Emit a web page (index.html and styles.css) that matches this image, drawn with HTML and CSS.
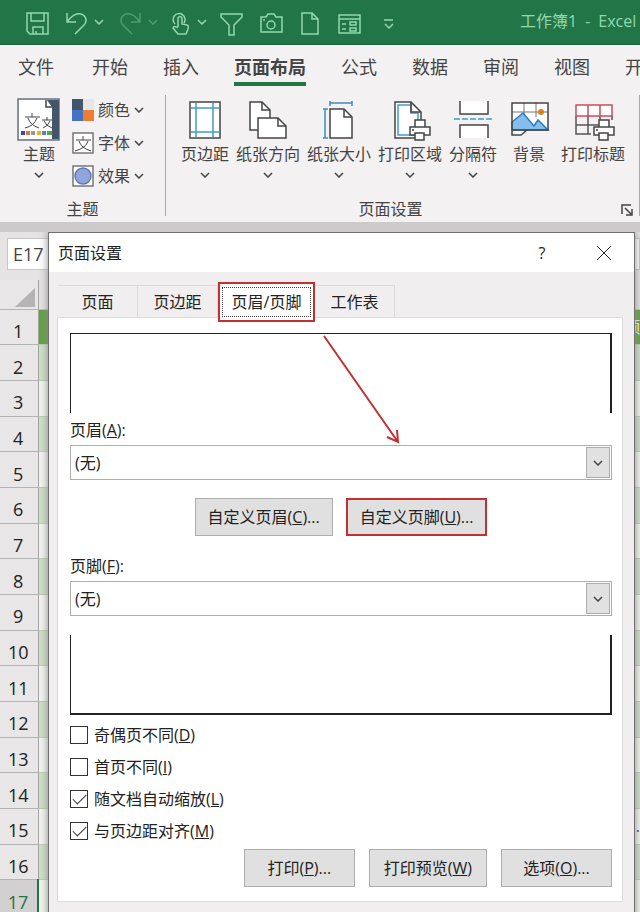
FILE: index.html
```html
<!DOCTYPE html>
<html lang="zh-CN">

<head>
    <meta charset="utf-8">
    <title>工作簿1 - Excel</title>
    <link rel="stylesheet" href="styles.css">
</head>

<body>
    <!-- shared shapes -->
    <svg class="defs" width="0" height="0">
        <symbol id="chev" viewBox="0 0 10 6"><path d="M1 1l4 4 4-4" /></symbol>
        <symbol id="printer" viewBox="0 0 22 22">
            <path d="M6 1h10v7H6zM1 8h20v8H1z" fill="#fff" /><path d="M6 14h9v7H6z" fill="#fff" /><path d="M3 11h2" />
        </symbol>
    </svg>

    <header class="titlebar">
        <div class="quick">
            <button aria-label="保存"><svg width="24" height="24"><path d="M1 1h21v21H4l-3-3zM5 1v8h13V1M7 22v-7h10v7M10 19v3" /></svg></button>
            <button class="split" aria-label="撤消"><svg width="24" height="24"><path d="M3 1v9h9M3 10C8 3 13 1 17 2c6 2 6 8 3 11l-9 9" /></svg><svg class="chev"><use href="#chev" /></svg></button>
            <button class="split dim" aria-label="恢复"><svg width="24" height="24"><path d="M22 1v9h-9M22 10C17 3 12 1 8 2c-6 2-6 8-3 11l9 9" /></svg><svg class="chev"><use href="#chev" /></svg></button>
            <button class="touch" aria-label="触摸模式"><svg width="22" height="24"><path d="M3 12a6 6 0 1 1 9-1M6 15V6q2-3 4 0v6l5 1q2 0 1 4l-2 5H6l-5-6q1-3 5 0" /></svg><svg class="chev"><use href="#chev" /></svg></button>
        </div>
        <div class="quick wide">
            <button aria-label="筛选"><svg width="24" height="24"><path d="M1 2h21v3l-8 8v10H9V13L1 5z" /></svg></button>
            <button aria-label="照相机"><svg width="24" height="24"><path d="M2 5h5l2-3h6l2 3h6v15H2z" /><circle cx="12" cy="13" r="4" /><path d="M4 8h2" /></svg></button>
            <button aria-label="新建"><svg width="24" height="24"><path d="M4 1h10l6 6v15H4zM14 1v6h6" /></svg></button>
            <button aria-label="窗体"><svg width="24" height="24"><path d="M2 3h21v18H2zM2 7h21M5 12h4M5 17h4M13 10h6v3h-6zM13 16h6v3h-6z" /></svg></button>
            <button aria-label="自定义快速访问工具栏"><svg width="24" height="24"><path d="M8 8h9M9 12l4 4 4-4" /></svg></button>
        </div>
        <div class="doc">工作簿1&ensp;-&ensp;Excel</div>
    </header>

    <nav class="tabs">
        <a href="#">文件</a>
        <a href="#">开始</a>
        <a href="#">插入</a>
        <a href="#" class="on">页面布局</a>
        <a href="#">公式</a>
        <a href="#">数据</a>
        <a href="#">审阅</a>
        <a href="#">视图</a>
        <a href="#">开发工具</a>
    </nav>

    <section class="ribbon">
        <div class="group theme">
            <div class="tools">
                <button class="big">
                    <svg width="44" height="44">
                        <rect x="1" y="1" width="41" height="41" fill="#dfe5ef" stroke="#687184" />
                        <path d="M2 2h27l6 6v33H2z" fill="#fff" stroke="none" />
                        <path d="M30 2h12v39h-7V9z" fill="#44546a" stroke="none" />
                        <path d="M29 2v7h6" stroke="#444" />
                        <path d="M8 19h15M15 15v4M11 20q2 7 11 10M20 20q-3 8-12 10M25 22h10M30 19v3M27 23q2 5 8 7M33 23q-2 5-7 7" stroke="#444" stroke-width="1" />
                        <g stroke="none"><path d="M4 33h4v4H4z" fill="#44449c" /><path d="M9 33h4v4H9z" fill="#d37c4b" /><path d="M14 33h4v4h-4z" fill="#999" /><path d="M20 33h4v4h-4z" fill="#f0b400" /><path d="M25 33h4v4h-4z" fill="#4a86c8" /><path d="M30 33h5v4h-5z" fill="#5f9f45" /></g>
                    </svg>
                    <span>主题</span>
                    <svg class="chev"><use href="#chev" /></svg>
                </button>
                <div class="smalls">
                    <button class="small"><svg width="22" height="22"><g stroke="none"><path d="M0 0h11v11H0z" fill="#44546a" /><path d="M11 0h11v11H11z" fill="#e7e6e6" /><path d="M0 11h11v11H0z" fill="#4472c4" /><path d="M11 11h11v11H11z" fill="#ed7d31" /></g></svg>颜色<svg class="chev"><use href="#chev" /></svg></button>
                    <button class="small"><svg width="22" height="22"><rect x="1" y="1" width="20" height="20" fill="#fff" stroke="#777" /><path d="M4 8h15M11 4v4M7 9q2 7 12 10M16 9q-2 7-13 10" stroke="#444" stroke-width="1" /></svg>字体<svg class="chev"><use href="#chev" /></svg></button>
                    <button class="small"><svg width="22" height="22"><rect x="1" y="1" width="20" height="20" fill="#fff" stroke="#777" /><circle cx="11" cy="11" r="8" fill="#8fa5dc" stroke="#5f79b8" /></svg>效果<svg class="chev"><use href="#chev" /></svg></button>
                </div>
            </div>
            <div class="foot"><span>主题</span></div>
        </div>
        <div class="group page">
            <div class="tools">
                <button class="big"><svg width="44" height="44"><path d="M7 4h30v36H7z" fill="#fff" /><path d="M13 5v34M30 5v34M8 10h28M8 34h28" stroke="#3f9fc4" /></svg><span>页边距</span><svg class="chev"><use href="#chev" /></svg></button>
                <button class="big"><svg width="44" height="44"><path d="M4 4h12l8 8v20H4z" fill="#fff" /><path d="M16 4v8h8" /><path d="M12 20h20l8 8v12H12z" fill="#fff" /><path d="M32 20v8h8" /></svg><span>纸张方向</span><svg class="chev"><use href="#chev" /></svg></button>
                <button class="big"><svg width="44" height="44"><path d="M13 11h14l8 8v21H13z" fill="#fff" /><path d="M27 11v8h8" /><path d="M13 5h22M13 3v5M35 3v5M8 11v29M6 11h5M6 40h5" stroke="#3f8fb0" /></svg><span>纸张大小</span><svg class="chev"><use href="#chev" /></svg></button>
                <button class="big"><svg width="44" height="44"><path d="M7 4h16l10 10v26H7z" fill="#fff" /><path d="M10 7h13v8h7v22H10z" stroke="#3f9fc4" /><path d="M23 4v10h10" /><use href="#printer" x="21" y="21" width="22" height="22" /></svg><span>打印区域</span><svg class="chev"><use href="#chev" /></svg></button>
                <button class="big"><svg width="44" height="44"><path d="M9 3v13h28V3M9 40V27h28v13" fill="#fff" /><path d="M3 21h40" stroke="#3f9fc4" stroke-dasharray="6 2" /></svg><span>分隔符</span><svg class="chev"><use href="#chev" /></svg></button>
                <button class="big plain"><svg width="44" height="44"><path d="M5 5h36v27H20l-6 5H5z" fill="#fff" stroke="none" /><path d="M17 5v12M29 5v14M5 14h36" stroke="#777" stroke-width="1" /><path d="M5 32v-8l11-9 11 13 4-6 10 10z" fill="#83beec" stroke="#2b7cb8" /><circle cx="34" cy="14" r="3" fill="#d9821e" stroke="none" /><path d="M5 32h36V5H5v32h9l6-5" /></svg><span>背景</span></button>
                <button class="big plain"><svg width="44" height="44"><path d="M5 18v18h15M17 18v18M5 27h25M29 18v6M41 18v4" fill="none" stroke="#555" /><path d="M5 7h36v11H5zM17 7v11M29 7v11" fill="#fff" stroke="#cf4b59" /><use href="#printer" x="22" y="21" width="22" height="22" /></svg><span>打印标题</span></button>
            </div>
            <div class="foot"><span>页面设置</span><button class="launch" aria-label="页面设置"><svg width="12" height="12"><path d="M1 10V1h9M4 4l6 6M5 11h6V5" /></svg></button></div>
        </div>
    </section>

    <main class="work">
        <div class="formula"><input class="namebox" aria-label="名称框" value="E17"><div class="fx"></div></div>
        <table class="sheet">
            <thead>
                <tr><th><svg width="20" height="19"><path d="M20 0v19H0z" fill="#b5b4b4" stroke="none" /></svg></th><td></td></tr>
            </thead>
            <tbody>
                <tr><th>1</th><td>额</td></tr>
                <tr><th>2</th><td></td></tr>
                <tr><th>3</th><td></td></tr>
                <tr><th>4</th><td></td></tr>
                <tr><th>5</th><td></td></tr>
                <tr><th>6</th><td></td></tr>
                <tr><th>7</th><td></td></tr>
                <tr><th>8</th><td></td></tr>
                <tr><th>9</th><td></td></tr>
                <tr><th>10</th><td></td></tr>
                <tr><th>11</th><td></td></tr>
                <tr><th>12</th><td></td></tr>
                <tr><th>13</th><td></td></tr>
                <tr><th>14</th><td></td></tr>
                <tr><th>15</th><td>.</td></tr>
                <tr><th>16</th><td></td></tr>
                <tr class="current"><th>17</th><td></td></tr>
            </tbody>
        </table>

        <div class="dialog" role="dialog" aria-label="页面设置">
            <div class="caption">
                <span>页面设置</span>
                <button aria-label="帮助">?</button>
                <button aria-label="关闭"><svg width="16" height="16"><path d="M1 1l14 14M15 1L1 15" /></svg></button>
            </div>
            <div class="dtabs">
                <button>页面</button>
                <button>页边距</button>
                <button class="on"><span>页眉/页脚</span></button>
                <button>工作表</button>
            </div>
            <form class="panel">
                <div class="preview top"></div>
                <label class="name" for="head">页眉(<u>A</u>):</label>
                <div class="combo">
                    <select id="head"><option>(无)</option></select>
                    <span class="drop"><svg class="chev"><use href="#chev" /></svg></span>
                </div>
                <div class="custom">
                    <button type="button">自定义页眉(<u>C</u>)...</button>
                    <button type="button" class="marked">自定义页脚(<u>U</u>)...</button>
                </div>
                <label class="name" for="foot">页脚(<u>F</u>):</label>
                <div class="combo">
                    <select id="foot"><option>(无)</option></select>
                    <span class="drop"><svg class="chev"><use href="#chev" /></svg></span>
                </div>
                <div class="preview bottom"></div>
                <div class="checks">
                    <label><input type="checkbox"><span>奇偶页不同(<u>D</u>)</span></label>
                    <label><input type="checkbox"><span>首页不同(<u>I</u>)</span></label>
                    <label><input type="checkbox" checked><span>随文档自动缩放(<u>L</u>)</span></label>
                    <label><input type="checkbox" checked><span>与页边距对齐(<u>M</u>)</span></label>
                </div>
                <div class="actions">
                    <button type="button">打印(<u>P</u>)...</button>
                    <button type="button">打印预览(<u>W</u>)</button>
                    <button type="button">选项(<u>O</u>)...</button>
                </div>
            </form>
            <svg class="arrow" width="80" height="112"><path d="M2 3l74 106M65 104l11 5-1-12" /></svg>
        </div>
    </main>
</body>

</html>
```
FILE: styles.css
```css
* {
    box-sizing: border-box;
}

body {
    margin: 0;
    height: 100vh;
    display: flex;
    flex-direction: column;
    overflow: hidden;
    background-color: #f3f1f2;
    color: #444;
    font-family: "Open Sans", "Noto Sans CJK SC", sans-serif;
    font-size: 16px;
    line-height: 24px;
}

button,
input,
select {
    font: inherit;
    color: inherit;
    margin: 0;
    padding: 0;
    border: 0;
    background: none;
}

svg {
    flex: none;
    fill: none;
    stroke: #444;
    stroke-width: 1.5;
}

.defs {
    position: absolute;
}

.chev {
    width: 10px;
    height: 6px;
}

/* title bar */
.titlebar {
    display: flex;
    align-items: center;
    flex: none;
    height: 45px;
    padding: 4px 0 0 26px;
    background-color: #217547;
    border-bottom: 1px solid #1b5f3a;
    color: #93d8ae;
    overflow: hidden;
    white-space: nowrap;
}

.titlebar svg {
    stroke: #93d8ae;
}

.quick {
    display: flex;
    flex: none;
    gap: 14px;
    margin-right: 13px;
}

.quick button {
    display: flex;
    align-items: center;
}

.quick.wide {
    gap: 15px;
}

.quick .split {
    gap: 6px;
}

.quick .touch {
    gap: 3px;
}

.quick .chev {
    margin-bottom: 4px;
}

.quick .dim {
    opacity: 0.4;
}

.doc {
    margin: 0 0 6px 107px;
}

/* ribbon tabs */
.tabs {
    display: flex;
    flex: none;
    gap: 35px;
    height: 50px;
    padding: 9px 0 9px 18px;
    overflow: hidden;
    white-space: nowrap;
    font-size: 18px;
}

.tabs a {
    flex: none;
    height: 32px;
    line-height: 26px;
    color: #444;
    text-decoration: none;
}

.tabs a:first-child {
    margin-right: 3px;
}

.tabs .on {
    font-weight: bold;
    border-bottom: 4px solid #217547;
}

/* ribbon */
.ribbon {
    display: flex;
    flex: none;
    height: 127px;
    padding-bottom: 6px;
}

.group {
    display: flex;
    flex-direction: column;
    justify-content: space-between;
    border-right: 1px solid #a9a9a9;
}

.theme {
    flex: none;
    width: 166px;
}

.page {
    flex: 1;
}

.tools {
    display: flex;
    gap: 7px;
    padding-top: 3px;
}

.theme .tools {
    padding-left: 17px;
    gap: 11px;
}

.page .tools {
    padding-left: 15px;
}

.big {
    display: flex;
    flex-direction: column;
    align-items: center;
    align-self: flex-start;
    flex: none;
    white-space: nowrap;
}

.big .chev {
    margin-top: 6px;
}

.big.plain {
    margin-left: 9px;
}

.big.plain svg {
    margin: 0 -6px;
}

.smalls {
    display: flex;
    flex-direction: column;
    gap: 9px;
}

.small {
    display: flex;
    align-items: center;
    gap: 4px;
}

.foot {
    display: flex;
    align-items: flex-end;
    text-align: center;
}

.foot span {
    flex: 1;
    line-height: 14px;
}

.launch {
    width: 24px;
    height: 12px;
    line-height: 12px;
}

/* worksheet behind the dialog */
.work {
    position: relative;
    flex: 1;
    overflow: hidden;
    background-color: #e5e3e4;
    border-top: 10px solid #cccacb;
}

.formula {
    display: flex;
    gap: 12px;
    padding: 6px 0 0 7px;
    height: 48px;
}

.namebox,
.fx {
    height: 32px;
    background-color: #fff;
    border: 1px solid #c8c6c7;
}

.namebox {
    width: 80px;
    padding-left: 5px;
    font-size: 18px;
}

.fx {
    flex: 1;
}

.sheet {
    width: 100%;
    height: 636px;
    table-layout: fixed;
    border-collapse: collapse;
}

.sheet th {
    width: 38px;
    padding: 8px 1px 0 0;
    border-right: 1px solid #a5a4a4;
    border-bottom: 1px solid #b5b4b4;
    background-color: #e8e6e7;
    color: #222;
    font-size: 18px;
    font-weight: normal;
}

.sheet td {
    padding: 0;
    border-bottom: 1px solid #b9cdb0;
    background-color: #f3f5f1;
    text-align: right;
}

.sheet thead tr {
    height: 29px;
}

.sheet thead th {
    padding: 0 3px 2px 0;
    text-align: right;
    line-height: 0;
    vertical-align: bottom;
}

.sheet thead td {
    background-color: #e5e3e4;
}

.sheet tr:nth-child(even) td {
    background-color: #d0e0c8;
}

.sheet tbody tr:first-child td {
    background-color: #62a242;
    color: #fff;
}

.sheet .current th {
    background-color: #d2d0d1;
    border-right: 2px solid #217547;
    color: #217547;
}

/* dialog */
.dialog {
    position: absolute;
    top: 0;
    left: 48px;
    right: 5px;
    padding-bottom: 60px;
    background-color: #f0eeef;
    border: 1px solid #707070;
    box-shadow: 0 0 8px #888;
    color: #222;
}

.caption {
    display: flex;
    align-items: center;
    height: 39px;
    padding: 0 22px 0 9px;
    background-color: #fff;
}

.caption span {
    flex: 1;
}

.caption button {
    display: flex;
    justify-content: center;
    width: 16px;
    margin-left: 46px;
}

.caption svg {
    stroke: #222;
    stroke-width: 1;
}

.dtabs {
    display: flex;
    padding: 13px 0 0 9px;
}

.dtabs button {
    width: 80px;
    height: 32px;
    border: 1px solid #dcdadb;
    border-width: 1px 1px 0 0;
}

.dtabs .on {
    position: relative;
    width: 97px;
    height: 40px;
    margin: -3px 0 -5px;
    padding: 2px;
    border: 2px solid #c4302f;
    background-color: #fff;
}

.dtabs .on span {
    display: block;
    height: 30px;
    border: 1px dotted #444;
    line-height: 28px;
}

.panel {
    margin: 0 11px 0 8px;
    padding: 15px 10px 14px 12px;
    background-color: #fff;
    border: 1px solid #dcdadb;
}

.preview {
    height: 80px;
    border: 1px solid #222;
    border-right-width: 2px;
}

.preview.top {
    border-bottom: 0;
}

.preview.bottom {
    margin-top: 19px;
    border-top: 0;
    border-bottom-width: 2px;
}

.name {
    display: block;
    margin: 5px 0 3px;
}

.combo {
    display: flex;
    height: 35px;
    padding: 1px;
    border: 1px solid #adadad;
}

.combo select {
    flex: 1;
    appearance: none;
    padding-left: 3px;
}

.drop {
    display: flex;
    align-items: center;
    justify-content: center;
    width: 24px;
    border: 1px solid #adadad;
    background-color: #e1e1e1;
}

.custom {
    display: flex;
    justify-content: center;
    gap: 13px;
    margin: 18px 0;
}

.custom button,
.actions button {
    height: 38px;
    padding: 0 12px;
    border: 1px solid #adadad;
    background-color: #e1e0e1;
}

.custom .marked {
    border: 2px solid #c4302f;
}

.checks {
    padding-top: 4px;
}

.checks label {
    display: flex;
    align-items: center;
    gap: 6px;
    height: 32px;
}

.checks input {
    appearance: none;
    width: 18px;
    height: 18px;
    border: 1px solid #333;
}

.checks input:checked::after {
    content: "";
    display: block;
    width: 12px;
    height: 6px;
    margin: 3px 0 0 2px;
    border: solid #333;
    border-width: 0 0 1px 1px;
    transform: rotate(-45deg);
}

.actions {
    display: flex;
    justify-content: flex-end;
    gap: 14px;
    margin-top: 2px;
}

.actions button {
    min-width: 111px;
    padding: 0 14px;
}

.arrow {
    position: absolute;
    top: 100px;
    left: 273px;
    stroke: #c4302f;
    stroke-width: 2;
}
```
